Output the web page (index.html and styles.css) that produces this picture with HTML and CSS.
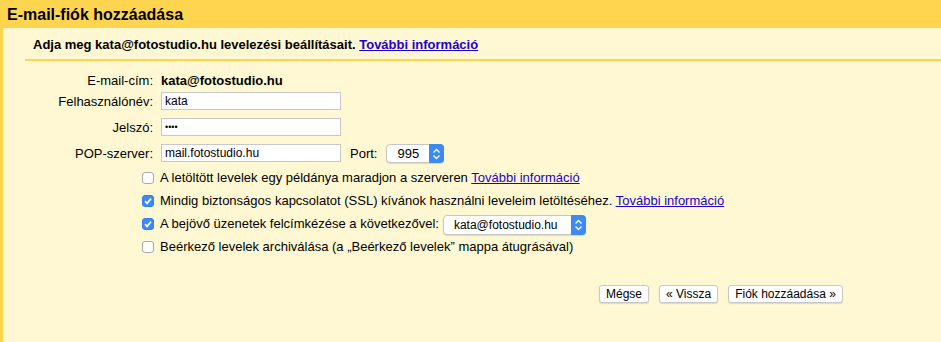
FILE: index.html
```html
<html>
<head>
    <meta http-equiv="Content-Type" content="text/html;charset=utf-8">
    <link rel="stylesheet" href="styles.css">
</head>
<body>
    <div id="title">E-mail-fiók hozzáadása</div>
    <div id="panel">
        <div class="intro">
            Adja meg kata@fotostudio.hu levelezési beállításait. <a href="#">További információ</a>
        </div>
        <div class="divider"></div>

        <div class="form">
            <div class="row first">
                <span class="label">E-mail-cím:</span>
                <b>kata@fotostudio.hu</b>
            </div>
            <div class="row">
                <span class="label">Felhasználónév:</span>
                <span class="field">kata</span>
            </div>
            <div class="row">
                <span class="label">Jelszó:</span>
                <span class="field dots">••••</span>
            </div>
            <div class="row">
                <span class="label">POP-szerver:</span>
                <span class="field">mail.fotostudio.hu</span>
                <span class="port">Port:</span>
                <span class="select small">995<span class="arrows"><svg width="9" height="12" viewBox="0 0 9 12"><path d="M1.5 4.5 L4.5 1.5 L7.5 4.5 M1.5 7.5 L4.5 10.5 L7.5 7.5" fill="none" stroke="#fff" stroke-width="1.4"/></svg></span></span>
            </div>

            <div class="checks">
                <div class="check">
                    <span class="box"></span>A letöltött levelek egy példánya maradjon a szerveren <a href="#">További információ</a>
                </div>
                <div class="check">
                    <span class="box on"><svg width="12" height="12" viewBox="0 0 12 12"><path d="M3 6.2 L5.1 8.4 L9 3.6" fill="none" stroke="#fff" stroke-width="1.7"/></svg></span>Mindig biztonságos kapcsolatot (SSL) kívánok használni leveleim letöltéséhez. <a href="#">További információ</a>
                </div>
                <div class="check">
                    <span class="box on"><svg width="12" height="12" viewBox="0 0 12 12"><path d="M3 6.2 L5.1 8.4 L9 3.6" fill="none" stroke="#fff" stroke-width="1.7"/></svg></span>A bejövő üzenetek felcímkézése a következővel:<span class="select wide">kata@fotostudio.hu<span class="arrows"><svg width="9" height="12" viewBox="0 0 9 12"><path d="M1.5 4.5 L4.5 1.5 L7.5 4.5 M1.5 7.5 L4.5 10.5 L7.5 7.5" fill="none" stroke="#fff" stroke-width="1.4"/></svg></span></span>
                </div>
                <div class="check">
                    <span class="box"></span>Beérkező levelek archiválása (a „Beérkező levelek” mappa átugrásával)
                </div>
            </div>

            <div class="buttons">
                <span class="button">Mégse</span>
                <span class="button">« Vissza</span>
                <span class="button">Fiók hozzáadása »</span>
            </div>
        </div>
    </div>
</body>
</html>
```
FILE: styles.css
```css
body {
    margin: 0;
    font-family: "Liberation Sans", Arial, sans-serif;
    font-size: 13px;
    color: #000;
    background-color: #fff8d3;
}

a {
    color: #2200cc;
    text-decoration: underline;
}

#title {
    height: 28px;
    line-height: 30px;
    padding-left: 7px;
    background-color: #ffd54f;
    font-weight: bold;
    font-size: 16px;
}

#panel {
    border-left: 3px solid #ffd54f;
    height: 314px;
    box-sizing: border-box;
}

.intro {
    padding: 8px 0 0 30px;
    height: 23px;
    line-height: 18px;
    font-weight: bold;
}

.divider {
    margin-left: 22px;
    height: 2px;
    background-color: #ffd54f;
}

.form {
    padding-top: 10px;
}

.row {
    display: flex;
    align-items: center;
    height: 18px;
    margin-bottom: 8px;
}

.row.first {
    margin-bottom: 3px;
}

.label {
    width: 150px;
    text-align: right;
    margin-right: 8px;
}

.field {
    box-sizing: border-box;
    width: 180px;
    height: 18px;
    line-height: 16px;
    padding-left: 3px;
    border: 1px solid #c8c8c8;
    background-color: #fff;
    font-size: 12px;
}

.dots {
    font-size: 9px;
}

.port {
    margin-left: 9px;
}

.select {
    position: relative;
    box-sizing: border-box;
    display: inline-block;
    height: 19px;
    line-height: 17px;
    padding-left: 10px;
    border: 1px solid #c6c6c6;
    border-radius: 4px;
    background-color: #fff;
    box-shadow: 0 1px 1px rgba(0,0,0,0.12);
}

.select.small {
    width: 58px;
    margin-left: 9px;
    margin-top: 1px;
}

.select.wide {
    width: 143px;
    height: 20px;
    line-height: 18px;
    margin-left: 4px;
    font-size: 12px;
    vertical-align: middle;
}

.arrows {
    position: absolute;
    top: -1px;
    right: -1px;
    bottom: -1px;
    width: 15px;
    display: flex;
    align-items: center;
    justify-content: center;
    background-color: #3b8af5;
    border-radius: 0 4px 4px 0;
}

.checks {
    margin-top: -4px;
    padding-left: 139px;
}

.check {
    height: 23px;
    line-height: 23px;
    white-space: nowrap;
}

.box {
    box-sizing: border-box;
    display: inline-block;
    vertical-align: middle;
    width: 12px;
    height: 12px;
    margin: -2px 6px 0 0;
    border: 1px solid #a9a9a9;
    border-radius: 3px;
    background-color: #fff;
    line-height: 0;
}

.box.on {
    border-color: #2f7ff2;
    background-color: #3b8af5;
}

.box.on svg {
    margin: -1px;
}

.buttons {
    display: flex;
    gap: 10px;
    margin-top: 27px;
    padding-left: 596px;
}

.button {
    box-sizing: border-box;
    height: 18px;
    line-height: 16px;
    padding: 0 6px;
    font-size: 12px;
    border: 1px solid #c8c8c8;
    border-radius: 3px;
    background-color: #fff;
    box-shadow: 0 1px 1px rgba(0,0,0,0.12);
}
```
